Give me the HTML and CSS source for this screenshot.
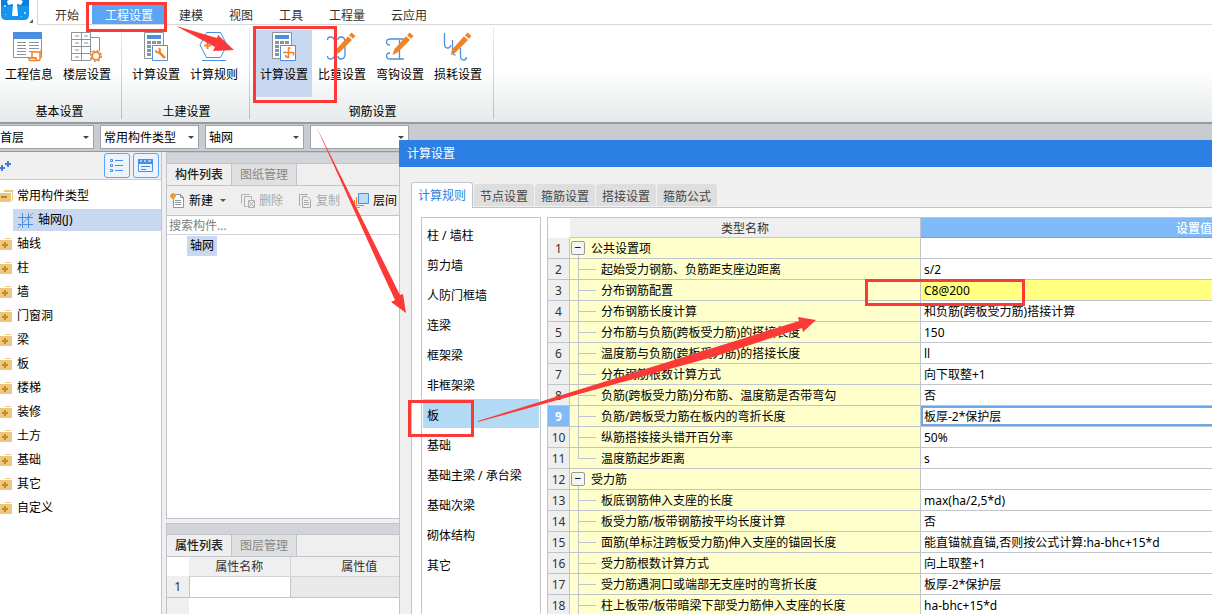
FILE: index.html
```html
<!DOCTYPE html>
<html lang="zh-CN">
<head>
<meta charset="utf-8">
<title>工程设置</title>
<link rel="stylesheet" href="styles.css">
</head>
<body>
<svg class="defs" aria-hidden="true">
  <symbol id="folder" viewBox="0 0 12 12"><path fill="#eec77f" d="M0 2h12v9q0 1-1 1H0zM5 1q0-1 1-1h4q1 0 1 1z"/><path fill="#c08e30" d="M2 6h6v2H2zM4 4h2v6H4z"/></symbol>
  <symbol id="calc" viewBox="0 0 32 32"><path fill="#fff" stroke="#8d9499" d="M4.500 2.500h19v26h-19z"/><path fill="#4a90e2" d="M7 5h14v4H7z"/><path fill="#8d9499" d="M7 11h4v3H7zM12 11h4v3h-4zM17 11h4v3h-4zM7 15h4v3H7zM7 19h4v3H7zM7 23h4v3H7z"/><path fill="#fff" stroke="#4a90e2" d="M12.500 15.500h15v15h-15z"/></symbol>
  <symbol id="pencil" viewBox="0 0 32 32"><path fill="#f08328" d="m25.500 2.500 4 3.500-2.500 2.800-4-3.600zM22 6.300l4 3.600-12.500 12.600-5 2.500 1.800-5.800z"/></symbol>
</svg>

<header class="top">
  <div class="logo">
    <svg width="37" height="25" viewBox="0 0 37 25"><path fill="#1695ee" d="M1 0h28v15q0 5-5 5H6q-5 0-5-5z"/><path fill="#0870d0" d="M1 0h28v6H1z" opacity=".6"/><path fill="#9edcff" d="M4 5h2v2H4zM24 12h2v2h-2zM5 14h1v1H5zM21 16h1v1h-1z"/><path fill="#fff" d="M7 1q7-4 16 0l-2 4-4-1 1 12h-6l1-12-5 1z"/><path fill="#666" d="M33 19v4h-4z"/></svg>
  </div>
  <nav class="menu">
    <button>开始</button><button class="on">工程设置</button><button>建模</button><button>视图</button><button>工具</button><button>工程量</button><button>云应用</button>
  </nav>
</header>

<section class="ribbon">
  <div class="group first">
    <div class="tools">
      <button><svg width="32" height="32" viewBox="0 0 32 32"><path fill="#fff" stroke="#8d9499" d="M.5 3.500h28v24H.5z"/><path fill="#4a90e2" d="M0 2h29v7H0z"/><path stroke="#8d9499" d="M4 12.500h9M16 12.500h10M4 15.500h9M16 15.500h10M4 18.500h9M16 18.500h10M4 21.500h9M16 21.500h4M4 24.500h9"/><path fill="#fff" stroke="#f08328" stroke-width="1.500" d="M19 27.500V22h9.500v-.500q0-1.500-1-1.500M19 22h8v7q0 1.500-1.500 1.500h-8q-1.500 0-1.500-2.500h7q0 2.500 2 2.500"/></svg>工程信息</button>
      <button><svg width="32" height="32" viewBox="0 0 32 32"><path fill="#fff" stroke="#8d9499" d="M.5 2.500h19v28H.5zM19.500 7.500h9v14h-9zM.5 9.500h19M.5 16.500h19M.5 23.500h19M10.500 2.500v28M4 6h4M4 13h4M4 20h4M4 27h4M13 6h4M13 13h4"/><circle cx="25" cy="26" r="6" fill="#fff"/><circle cx="25" cy="26" r="3.800" fill="none" stroke="#f08328" stroke-width="1.800"/><circle cx="25" cy="26" r="5.300" fill="none" stroke="#f08328" stroke-width="1.500" stroke-dasharray="2.100 2.060"/></svg>楼层设置</button>
    </div>
    <h2>基本设置</h2>
  </div>
  <div class="group">
    <div class="tools">
      <button><svg width="32" height="32"><use href="#calc"/><path stroke="#f08328" stroke-width="2.500" d="m18.500 21.500 6.500 6.500"/><path stroke="#f08328" stroke-width="2" fill="none" d="M15.500 20.500q1.500 3 3.500 1.500t0-4"/></svg>计算设置</button>
      <button><svg width="32" height="32" viewBox="0 0 32 32"><path fill="none" stroke="#4a90e2" d="m8.500 2.500 14 0 6.500 12.500-6.500 12.500h-14L2 15zM4 30.500h24"/><path stroke="#f08328" stroke-width="2" d="M6 15.500h7M9.500 12v7"/></svg>计算规则</button>
    </div>
    <h2>土建设置</h2>
  </div>
  <div class="group">
    <div class="tools">
      <button class="on"><svg width="32" height="32"><use href="#calc"/><path stroke="#f08328" stroke-width="1.500" fill="none" d="M22.500 18h-2v9.500q-3 0-3-2.500M15 22.500h10.500v3"/></svg>计算设置</button>
      <button><svg width="32" height="32"><path fill="none" stroke="#4a90e2" stroke-width="1.300" d="M1.500 10q0-3 3-3 4 0 4 5v12q0 5-4 5-3 0-3-3M12 10q0-3 3-3 4 0 4 5v12q0 5-4 5-3 0-3-3"/><use href="#pencil"/></svg>比重设置</button>
      <button><svg width="32" height="32"><path fill="none" stroke="#4a90e2" stroke-width="1.300" d="M6 15q-3.500 0-3.500-3t4-3H20M6 23q-3.500 0-3.500 3t4 3H20M15.500 10v19"/><use href="#pencil"/></svg>弯钩设置</button>
      <button><svg width="32" height="32"><path fill="none" stroke="#4a90e2" stroke-width="1.300" d="M2.500 3v11q0 4 3 4t3-3M10.500 10v11q0 4 3 4M18.500 18v8q0 4 3 4t3-3"/><use href="#pencil"/></svg>损耗设置</button>
    </div>
    <h2>钢筋设置</h2>
  </div>
</section>

<div class="filters">
  <label class="pick cut"><select aria-label="楼层"><option>首层</option></select></label>
  <label class="pick"><select aria-label="类型"><option>常用构件类型</option></select></label>
  <label class="pick"><select aria-label="构件"><option>轴网</option></select></label>
  <label class="pick"><select aria-label="名称"><option></option></select></label>
</div>

<main class="work">
  <aside class="side">
    <div class="sidebar-tools">
      <svg class="plus" width="12" height="12"><path stroke="#3c80d8" stroke-width="2" d="M0 8h5M2 5v6M5 4h6M8 1v6"/></svg>
      <button aria-label="列表"><svg width="24" height="24"><path fill="none" stroke="#4a90e2" d="M5.500 5.500h2v2h-2zM5.500 10.500h2v2h-2zM5.500 15.500h2v2h-2zM10 6.500h8M10 11.500h8M10 16.500h8"/></svg></button>
      <button aria-label="窗口"><svg width="24" height="24"><path fill="none" stroke="#4a90e2" d="M4.500 5.500h14v12h-14zM7 12.500h9M7 15.500h5"/><path fill="#4a90e2" d="M4 5h15v5H4z"/><path stroke="#fff" d="M6 7h2M10 7h2M14 7h3"/></svg></button>
    </div>
    <ul class="tree">
      <li><svg class="open" width="13" height="12"><path fill="#eec77f" d="M0 3h11v9H0zM4 0h9v11h-1V2H4z"/><path stroke="#b98420" stroke-width="2" d="M1 7h6"/></svg>常用构件类型</li>
      <li class="leaf"><svg width="15" height="15"><path stroke="#4a90e2" d="M0 4.500h15M0 11.500h15M4.500 0v15M10.500 0v15"/><path stroke="#b48a70" d="M0 15 15 0"/></svg>轴网(J)</li>
      <li><svg width="12" height="12"><use href="#folder"/></svg>轴线</li>
      <li><svg width="12" height="12"><use href="#folder"/></svg>柱</li>
      <li><svg width="12" height="12"><use href="#folder"/></svg>墙</li>
      <li><svg width="12" height="12"><use href="#folder"/></svg>门窗洞</li>
      <li><svg width="12" height="12"><use href="#folder"/></svg>梁</li>
      <li><svg width="12" height="12"><use href="#folder"/></svg>板</li>
      <li><svg width="12" height="12"><use href="#folder"/></svg>楼梯</li>
      <li><svg width="12" height="12"><use href="#folder"/></svg>装修</li>
      <li><svg width="12" height="12"><use href="#folder"/></svg>土方</li>
      <li><svg width="12" height="12"><use href="#folder"/></svg>基础</li>
      <li><svg width="12" height="12"><use href="#folder"/></svg>其它</li>
      <li><svg width="12" height="12"><use href="#folder"/></svg>自定义</li>
    </ul>
  </aside>

  <div class="panels">
    <section class="panel parts">
      <div class="strip"></div>
      <div class="ptabs"><button class="on">构件列表</button><button>图纸管理</button></div>
      <div class="ptools">
        <button><svg width="16" height="16"><path fill="#fff" stroke="#8d9499" d="M3.500 1.500h7l3 3v10h-10zM10.500 1.500v3h3M5 7.500h6M5 9.500h6M5 11.500h6"/><path stroke="#f09a30" stroke-width="1.500" d="M0 3h6M3 0v6M1 1l4 4M5 1 1 5"/></svg>新建<i class="caret"></i></button>
        <button class="off"><svg width="16" height="16"><path fill="none" stroke="#b0b0b0" d="M1.500 10.500v-9h8M4.500 13.500v-10h7v3M4.500 13.500h3M8.500 7.500h6v7h-6zM9 8l5 6M14 8l-5 6"/></svg>删除</button>
        <button class="off"><svg width="16" height="16"><path fill="none" stroke="#a8a8a8" d="M3 12.500H2.500v-11h8M5.500 3.500h5l3 3v8h-8zM7 7.500h4M7 9.500h5M7 11.500h5"/></svg>复制</button>
        <button><svg width="16" height="16"><path fill="#bcdcff" stroke="#4a90e2" d="M4.500.5h10v10h-10z"/><path fill="none" stroke="#f08328" d="M2.500 4v8.500H10M.500 7v7.500H6"/></svg>层间</button>
      </div>
      <input class="search" type="text" placeholder="搜索构件..." aria-label="搜索构件">
      <div class="found"><span>轴网</span></div>
    </section>
    <section class="panel props">
      <div class="strip"></div>
      <div class="ptabs"><button class="on">属性列表</button><button>图层管理</button></div>
      <table class="ptable">
        <tr><th class="no"></th><th class="pn">属性名称</th><th class="pv">属性值</th></tr>
        <tr><td class="no">1</td><td></td><td class="gray"></td></tr>
        <tr class="rest"><td class="no"></td><td></td><td></td></tr>
      </table>
    </section>
  </div>
</main>

<section class="dialog" role="dialog" aria-label="计算设置">
  <h1>计算设置</h1>
  <div class="dbody">
    <div class="dtabs"><button class="on">计算规则</button><button>节点设置</button><button>箍筋设置</button><button>搭接设置</button><button>箍筋公式</button></div>
    <div class="page">
      <ul class="kinds">
        <li>柱 / 墙柱</li><li>剪力墙</li><li>人防门框墙</li><li>连梁</li><li>框架梁</li><li>非框架梁</li><li class="on">板</li><li>基础</li><li>基础主梁 / 承台梁</li><li>基础次梁</li><li>砌体结构</li><li>其它</li>
      </ul>
      <div class="sheet">
        <table class="rules">
          <thead><tr><th class="no"></th><th class="name">类型名称</th><th class="val">设置值</th></tr></thead>
          <tbody>
            <tr class="head"><td>1</td><td><button aria-label="收起">−</button>公共设置项</td><td></td></tr>
            <tr><td>2</td><td>起始受力钢筋、负筋距支座边距离</td><td>s/2</td></tr>
            <tr class="mark"><td>3</td><td>分布钢筋配置</td><td>C8@200</td></tr>
            <tr><td>4</td><td>分布钢筋长度计算</td><td>和负筋(跨板受力筋)搭接计算</td></tr>
            <tr><td>5</td><td>分布筋与负筋(跨板受力筋)的搭接长度</td><td>150</td></tr>
            <tr><td>6</td><td>温度筋与负筋(跨板受力筋)的搭接长度</td><td>ll</td></tr>
            <tr><td>7</td><td>分布钢筋根数计算方式</td><td>向下取整+1</td></tr>
            <tr><td>8</td><td>负筋(跨板受力筋)分布筋、温度筋是否带弯勾</td><td>否</td></tr>
            <tr class="current"><td>9</td><td>负筋/跨板受力筋在板内的弯折长度</td><td>板厚-2*保护层</td></tr>
            <tr><td>10</td><td>纵筋搭接接头错开百分率</td><td>50%</td></tr>
            <tr class="last"><td>11</td><td>温度筋起步距离</td><td>s</td></tr>
            <tr class="head"><td>12</td><td><button aria-label="收起">−</button>受力筋</td><td></td></tr>
            <tr><td>13</td><td>板底钢筋伸入支座的长度</td><td>max(ha/2,5*d)</td></tr>
            <tr><td>14</td><td>板受力筋/板带钢筋按平均长度计算</td><td>否</td></tr>
            <tr><td>15</td><td>面筋(单标注跨板受力筋)伸入支座的锚固长度</td><td>能直锚就直锚,否则按公式计算:ha-bhc+15*d</td></tr>
            <tr><td>16</td><td>受力筋根数计算方式</td><td>向上取整+1</td></tr>
            <tr><td>17</td><td>受力筋遇洞口或端部无支座时的弯折长度</td><td>板厚-2*保护层</td></tr>
            <tr><td>18</td><td>柱上板带/板带暗梁下部受力筋伸入支座的长度</td><td>ha-bhc+15*d</td></tr>
          </tbody>
        </table>
      </div>
    </div>
  </div>
</section>

<svg class="marks" width="1212" height="614" viewBox="0 0 1212 614" aria-hidden="true">
  <path fill="none" stroke="#fb3a38" stroke-width="3" d="M87.500 3.500h78v27h-78zM254.500 27.500h81v74h-81zM409.500 401.500h63v34h-63zM866.500 280.500h157v24h-157z"/>
  <g fill="#fb3a38">
    <path d="M176 26 217 38 218 35 234 50 213 51 215 47z"/>
    <path d="M316 126 400 295 403 294 406 313 391 302 395 300 381 270z"/>
    <path d="M478 421 799 321 798 317 816 320 803 332 802 328 713 357 478 422z"/>
  </g>
</svg>
</body>
</html>
```
FILE: styles.css
```css
* { box-sizing: border-box; }
body {
  margin: 0; height: 100vh; overflow: hidden; position: relative;
  display: flex; flex-direction: column;
  font: 12px/16px "Noto Sans", "Noto Sans CJK SC", sans-serif;
  color: #000; background: #efefef;
}
button { font: inherit; color: inherit; border: 0; background: none; padding: 0; white-space: nowrap; }
ul { list-style: none; margin: 0; padding: 0; }
h1, h2 { margin: 0; font: inherit; }
svg { display: block; flex: none; }
.defs { position: absolute; width: 0; height: 0; }

.top { display: flex; height: 25px; background: #fff; }
.logo { width: 38px; border-right: 1px solid #d8d8d8; }
.menu { flex: 1; display: flex; align-items: flex-end; padding-left: 4px; border-bottom: 1px solid #d8d8d8; color: #333; }
.menu button { height: 19px; padding: 2px 13px 0; }
.menu .on { background: #5ba4f6; color: #fff; }

.ribbon { display: flex; height: 99px; padding-top: 2px; background: linear-gradient(#fff 45%, #e6eaeb); border-bottom: 2px solid #969a9e; }
.group { padding: 0 6px 0 5px; border-right: 1px solid; border-image: linear-gradient(#eee, #bbb) 1; margin-bottom: 3px; }
.first { padding: 0 5px 0 0; }
.tools { display: flex; height: 77px; padding-top: 3px; }
.tools button { width: 58px; height: 67px; display: flex; flex-direction: column; align-items: center; gap: 5px; }
.tools .on { width: 56px; margin: 0 1px; background: #c8d8f0; }
.group h2 { padding-left: 3px; text-align: center; }

.filters { display: flex; gap: 6px; height: 28px; padding: 1px 0 0; background: #c8cbd0; border-bottom: 1px solid #96999e; }
.pick { position: relative; width: 99px; height: 24px; }
.pick::after { content: ""; position: absolute; right: 5px; top: 11px; border: 3px solid transparent; border-top-color: #444; border-bottom: 0; }
.pick select { appearance: none; width: 100%; height: 24px; border: 1px solid #a0a3a8; border-radius: 0; background: #fff; padding: 1px 3px 0; font: inherit; color: #000; }
.cut { width: 94px; }
.cut select { border-left: 0; padding-left: 0; }

.work { flex: 1; display: flex; gap: 4px; min-height: 0; }
.side { width: 162px; background: #fff; border-right: 1px solid #c0c4cc; }
.sidebar-tools { height: 28px; display: flex; align-items: center; gap: 3px; padding-right: 2px; background: #efefef; border-bottom: 1px solid #c8cbd0; }
.plus { margin-right: auto; }
.sidebar-tools button { width: 26px; height: 25px; border: 1px solid #5ba4f6; border-radius: 3px; background: #eaf3fe; }
.tree { padding-top: 4px; }
.tree li { display: flex; align-items: center; gap: 5px; height: 24px; }
.tree .open { margin-right: -1px; }
.tree .leaf { height: 22px; margin: 1px 0 1px 13px; padding-left: 5px; background: #c8d8f0; }

.panels { width: 234px; display: flex; flex-direction: column; gap: 4px; }
.panel { display: flex; flex-direction: column; border: 1px solid #c0c4cc; background: #fff; }
.parts { flex: 1; }
.strip { height: 11px; background: #d3d4da; border-bottom: 1px solid #c0c4cc; }
.ptabs { display: flex; height: 22px; background: #efefef; border-bottom: 1px solid #c0c4cc; }
.ptabs button { width: 65px; background: #e0e0e0; color: #888; border-right: 1px solid #c0c4cc; }
.ptabs .on { background: #efefef; color: #222; font-weight: 500; }
.ptools { display: flex; height: 30px; gap: 14px; padding-left: 3px; background: #efefef; border-bottom: 1px solid #c0c4cc; }
.ptools button { display: flex; align-items: center; gap: 3px; }
.ptools .off { color: #aaa; }
.caret { margin-left: 4px; border: 3px solid transparent; border-top-color: #555; border-bottom: 0; }
.search { height: 19px; border: 0; border-bottom: 1px solid #d0d3d8; padding: 0 2px; font: inherit; }
.search::placeholder { color: #808080; }
.found { flex: 1; padding: 1px 0 0 20px; }
.found span { display: inline-block; padding: 2px 3px; background: #c8d8f0; }

.props { border-bottom: 0; }
.ptable { width: 262px; border-collapse: collapse; table-layout: fixed; }
.ptable th { height: 19px; padding: 2px 0 0; line-height: 16px; font-weight: 400; color: #333; background: #efefef; border-right: 1px solid #d0d3d8; border-bottom: 1px solid #d0d3d8; }
.ptable td { height: 21px; padding: 1px 0 0; border-right: 1px solid #c0c4cc; border-bottom: 1px solid #c0c4cc; }
.ptable .no { width: 22px; text-align: center; color: #333; background: #efefef; }
.ptable th.no { background: #fff; border: 0; }
.pn { width: 101px; }
.ptable .gray { background: #e9e9e9; }
.ptable .rest td { height: 17px; border-right: 0; border-bottom: 0; }

.dialog { position: absolute; left: 399px; top: 140px; right: 0; bottom: 0; display: flex; flex-direction: column; overflow: hidden; background: #f0f0f0; }
.dialog h1 { height: 27px; flex: none; padding-left: 8px; line-height: 28px; color: #fff; background: #2d80e3; }
.dbody { flex: 1; min-height: 0; display: flex; flex-direction: column; padding: 15px 0 0 11px; border-left: 1px solid #c0c4cc; }
.dtabs { display: flex; align-items: flex-end; gap: 1px; flex: none; }
.dtabs button { height: 22px; width: 60px; margin-bottom: 1px; padding-top: 3px; border-radius: 3px 3px 0 0; background: #dedede; color: #444; }
.dtabs .on { position: relative; height: 26px; width: 62px; margin-bottom: -1px; padding-top: 1px; border: 1px solid #c0c4cc; border-bottom: 0; background: #fff; color: #2d80e3; }
.page { flex: 1; min-height: 0; display: flex; gap: 6px; padding: 9px 0 0 9px; background: #fff; border: 1px solid #c0c4cc; border-width: 1px 0 0 1px; }
.kinds { width: 120px; flex: none; padding: 1px 1px 0; border: 1px solid #c0c4cc; border-bottom: 0; }
.kinds li { height: 30px; padding: 2px 4px 0; line-height: 30px; }
.kinds .on { background: linear-gradient(#b3daf5, #b3daf5) 0 0 / 100% 29px no-repeat; }

.sheet { flex: 1; min-width: 0; overflow: hidden; border: 1px solid #c0c4cc; border-width: 1px 0 0 1px; }
.rules { width: 919px; border-spacing: 0; table-layout: fixed; }
.rules th { height: 20px; padding: 2px 0 0; font-weight: 400; color: #333; background: #efefef; border-bottom: 1px solid #c8c8cc; }
.rules th.no { width: 22px; background: #fff; border: 0; }
.rules th.name { width: 351px; border-right: 1px solid #c0c4cc; }
.rules th.val { color: #fff; font-weight: 500; background: #80baf9; border-bottom-color: #62a4e8; }
.rules td { height: 21px; padding: 2px 3px 0; line-height: 18px; white-space: nowrap; border-right: 1px solid #c0c4cc; border-bottom: 1px solid #c0c4cc; }
.rules td:nth-child(1) { padding: 2px 0 0; text-align: center; color: #333; background: #efefef; }
.rules td:nth-child(2) {
  padding-left: 31px;
  background:
    linear-gradient(#c0c4cc, #c0c4cc) 8px 0 / 1px 100% no-repeat,
    linear-gradient(#c0c4cc, #c0c4cc) 8px 10px / 18px 1px no-repeat, #ffffcb;
}
.rules .last td:nth-child(2) {
  background:
    linear-gradient(#c0c4cc, #c0c4cc) 8px 0 / 1px 10px no-repeat,
    linear-gradient(#c0c4cc, #c0c4cc) 8px 10px / 18px 1px no-repeat, #ffffcb;
}
.rules .head td:nth-child(2) { padding-left: 1px; background: linear-gradient(#c0c4cc, #c0c4cc) 8px 100% / 1px 4px no-repeat, #ffffcb; }
.rules .head button { width: 14px; height: 14px; margin-right: 6px; line-height: 11px; vertical-align: 1px; border: 1px solid #999; border-radius: 2px; background: #f4f4f4; }
.rules .mark td:nth-child(3) { background: #ffff80; }
.rules .current td:nth-child(1) { color: #fff; font-weight: 700; background: #80baf9; }
.rules .current td:nth-child(3) { box-shadow: inset 0 0 0 2px #6aa8ea; }

.marks { position: absolute; left: 0; top: 0; pointer-events: none; }
```
